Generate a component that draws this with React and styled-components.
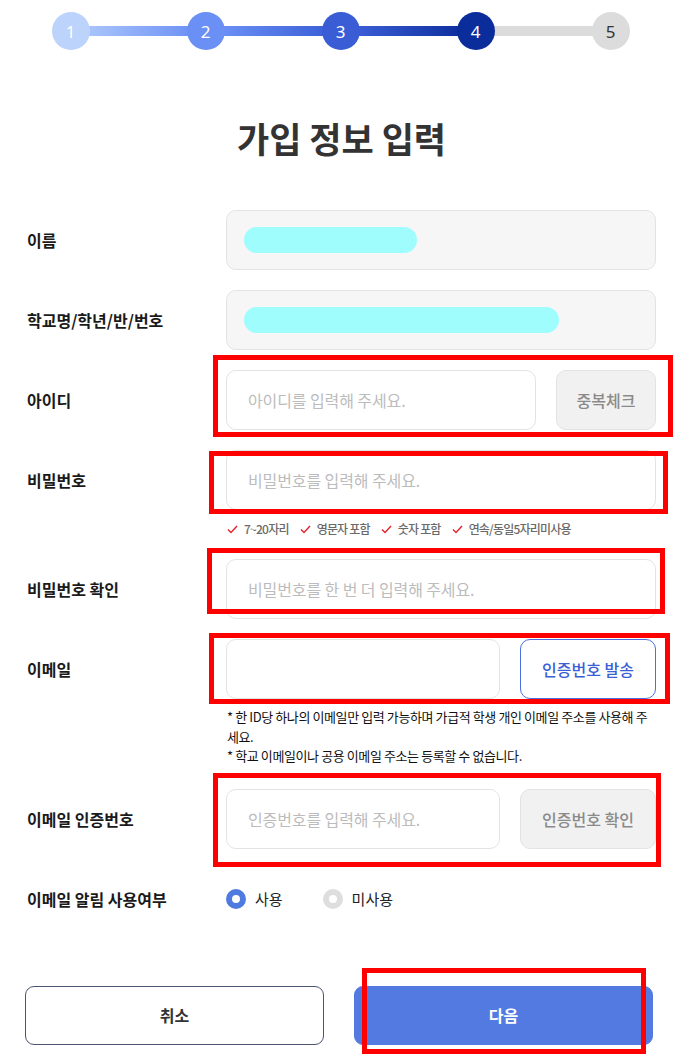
import React from "react"
import styled, { createGlobalStyle } from "styled-components"

const GlobalStyle = createGlobalStyle`
  body {
    margin: 0;
    background: #fff;
    font-family: "Noto Sans CJK KR", "Noto Sans", sans-serif;
    color: #222;
  }
  * { box-sizing: border-box; }
`

const steps = [
  { n: 1, bg: "#bcd3fb", fg: "#fff" },
  { n: 2, bg: "#6a8ff5", fg: "#fff" },
  { n: 3, bg: "#3a5dd6", fg: "#fff" },
  { n: 4, bg: "#0b2d9c", fg: "#fff" },
  { n: 5, bg: "#dcdcdc", fg: "#333" },
]

const bars = [
  "linear-gradient(90deg, #a9c4fb, #6f93f5)",
  "linear-gradient(90deg, #6a8ff5, #3d61d8)",
  "linear-gradient(90deg, #3a5dd6, #0f309e)",
  "#dcdcdc",
]

const marks = [
  { left: 213, top: 355, width: 460, height: 82 },
  { left: 209, top: 451, width: 459, height: 63 },
  { left: 207, top: 548, width: 458, height: 66 },
  { left: 209, top: 633, width: 461, height: 71 },
  { left: 213, top: 773, width: 448, height: 94 },
  { left: 362, top: 968, width: 284, height: 86 },
]

const hints = ["7~20자리", "영문자 포함", "숫자 포함", "연속/동일5자리미사용"]

const Check = () => (
  <svg width="11" height="9" viewBox="0 0 11 9">
    <polyline points="1,4.5 4,7.5 10,1" fill="none" stroke="#e0222c" strokeWidth="1.4" />
  </svg>
)

export default function App() {
  return (
    <Page>
      <GlobalStyle />
      <Stepper>
        {steps.map((s, i) => (
          <React.Fragment key={s.n}>
            <StepCircle $bg={s.bg} $fg={s.fg}>{s.n}</StepCircle>
            {i < bars.length && <StepBar $bg={bars[i]} />}
          </React.Fragment>
        ))}
      </Stepper>

      <Title>가입 정보 입력</Title>

      <Form>
        <Row>
          <Label>이름</Label>
          <ReadonlyBox><Redact $w={173} /></ReadonlyBox>
        </Row>
        <Row>
          <Label>학교명/학년/반/번호</Label>
          <ReadonlyBox><Redact $w={315} /></ReadonlyBox>
        </Row>
        <Row>
          <Label>아이디</Label>
          <InputLine>
            <Input placeholder="아이디를 입력해 주세요." />
            <SideButton $w={100}>중복체크</SideButton>
          </InputLine>
        </Row>
        <Row>
          <Label>비밀번호</Label>
          <Field>
            <Input type="password" placeholder="비밀번호를 입력해 주세요." />
            <Hints>
              {hints.map((h) => (
                <Hint key={h}><Check />{h}</Hint>
              ))}
            </Hints>
          </Field>
        </Row>
        <Row>
          <Label>비밀번호 확인</Label>
          <Input type="password" placeholder="비밀번호를 한 번 더 입력해 주세요." />
        </Row>
        <Row>
          <Label>이메일</Label>
          <Field>
            <InputLine>
              <Input />
              <SideButton $w={136} $primary>인증번호 발송</SideButton>
            </InputLine>
            <Notes>
              <p>* 한 ID당 하나의 이메일만 입력 가능하며 가급적 학생 개인 이메일 주소를 사용해 주세요.</p>
              <p>* 학교 이메일이나 공용 이메일 주소는 등록할 수 없습니다.</p>
            </Notes>
          </Field>
        </Row>
        <Row>
          <Label>이메일 인증번호</Label>
          <InputLine>
            <Input placeholder="인증번호를 입력해 주세요." />
            <SideButton $w={136}>인증번호 확인</SideButton>
          </InputLine>
        </Row>
        <Row>
          <Label>이메일 알림 사용여부</Label>
          <RadioGroup>
            <RadioItem>
              <RadioDot $on />
              사용
            </RadioItem>
            <RadioItem>
              <RadioDot />
              미사용
            </RadioItem>
          </RadioGroup>
        </Row>
      </Form>

      <Actions>
        <ActionButton>취소</ActionButton>
        <ActionButton $primary>다음</ActionButton>
      </Actions>

      {marks.map((m, i) => (
        <Mark key={i} style={m} />
      ))}
    </Page>
  )
}

const Page = styled.div`
  position: relative;
  width: 683px;
  height: 1055px;
  overflow: hidden;
`

const Stepper = styled.div`
  display: flex;
  align-items: center;
  justify-content: center;
  padding-top: 12px;
  margin-left: -2px;
`

const StepCircle = styled.div`
  width: 38px;
  height: 38px;
  border-radius: 50%;
  background: ${(p) => p.$bg};
  color: ${(p) => p.$fg};
  display: flex;
  align-items: center;
  justify-content: center;
  font-family: "Noto Sans", sans-serif;
  font-size: 17px;
  position: relative;
  z-index: 1;
`

const StepBar = styled.div`
  width: 101px;
  height: 10px;
  margin: 0 -2px;
  background: ${(p) => p.$bg};
`

const Title = styled.h1`
  margin: 68px 0 0;
  text-align: center;
  font-size: 35px;
  line-height: 40px;
  font-weight: 700;
  color: #333;
`

const Form = styled.div`
  display: flex;
  flex-direction: column;
  gap: 20px;
  margin-top: 52px;
  padding-left: 27px;
`

const Row = styled.div`
  display: grid;
  grid-template-columns: 199px 430px;
  align-items: start;
`

const Label = styled.div`
  height: 60px;
  display: flex;
  align-items: center;
  font-size: 16px;
  font-weight: 700;
  color: #1a1a1a;
`

const Field = styled.div`
  display: flex;
  flex-direction: column;
`

const InputLine = styled.div`
  display: flex;
  gap: 20px;
`

const Input = styled.input`
  flex: 1;
  min-width: 0;
  min-height: 60px;
  height: 60px;
  border: 1px solid #e3e3e3;
  border-radius: 10px;
  padding: 0 21px;
  font-family: inherit;
  font-size: 16px;
  color: #333;
  background: #fff;
  outline: none;
  letter-spacing: -0.1px;

  &::placeholder {
    color: #bcbcbc;
  }
`

const ReadonlyBox = styled.div`
  height: 60px;
  border: 1px solid #e3e3e3;
  border-radius: 10px;
  background: #f6f6f6;
  display: flex;
  align-items: center;
  padding-left: 17px;
`

const Redact = styled.span`
  width: ${(p) => p.$w}px;
  height: 26px;
  border-radius: 13px;
  background: #9ffdfd;
`

const SideButton = styled.button`
  flex: none;
  width: ${(p) => p.$w}px;
  height: 60px;
  border-radius: 10px;
  font-family: inherit;
  font-size: 16px;
  font-weight: 500;
  border: 1px solid ${(p) => (p.$primary ? "#4a6fe0" : "#e3e3e3")};
  background: ${(p) => (p.$primary ? "#fff" : "#f1f1f1")};
  color: ${(p) => (p.$primary ? "#3b5fd4" : "#8a8a8a")};
`

const Hints = styled.div`
  display: flex;
  gap: 11px;
  margin-top: 9px;
  padding-left: 1px;
`

const Hint = styled.span`
  display: flex;
  align-items: center;
  gap: 6px;
  font-size: 12px;
  line-height: 20px;
  font-weight: 500;
  color: #6a6a6a;
  letter-spacing: -0.8px;
`

const Notes = styled.div`
  margin-top: 8px;
  padding: 0 0 3px 1px;
  font-size: 13px;
  line-height: 19.5px;
  color: #111;
  letter-spacing: -0.4px;

  p {
    margin: 0;
  }
`

const RadioGroup = styled.div`
  height: 60px;
  display: flex;
  align-items: center;
  gap: 40px;
`

const RadioItem = styled.label`
  display: flex;
  align-items: center;
  gap: 9px;
  font-size: 15px;
  color: #222;
`

const RadioDot = styled.span`
  width: 20px;
  height: 20px;
  border-radius: 50%;
  border: 6px solid ${(p) => (p.$on ? "#4f7be0" : "#dedede")};
  background: #fff;
`

const Actions = styled.div`
  display: flex;
  gap: 30px;
  margin-top: 57px;
  padding-left: 25px;
`

const ActionButton = styled.button`
  width: 299px;
  height: 59px;
  border-radius: 9px;
  font-family: inherit;
  font-size: 16px;
  font-weight: 700;
  border: 1px solid ${(p) => (p.$primary ? "#527ae0" : "#4b5470")};
  background: ${(p) => (p.$primary ? "#527ae0" : "#fff")};
  color: ${(p) => (p.$primary ? "#fff" : "#333")};
`

const Mark = styled.div`
  position: absolute;
  border: 5px solid #ff0000;
  pointer-events: none;
`
